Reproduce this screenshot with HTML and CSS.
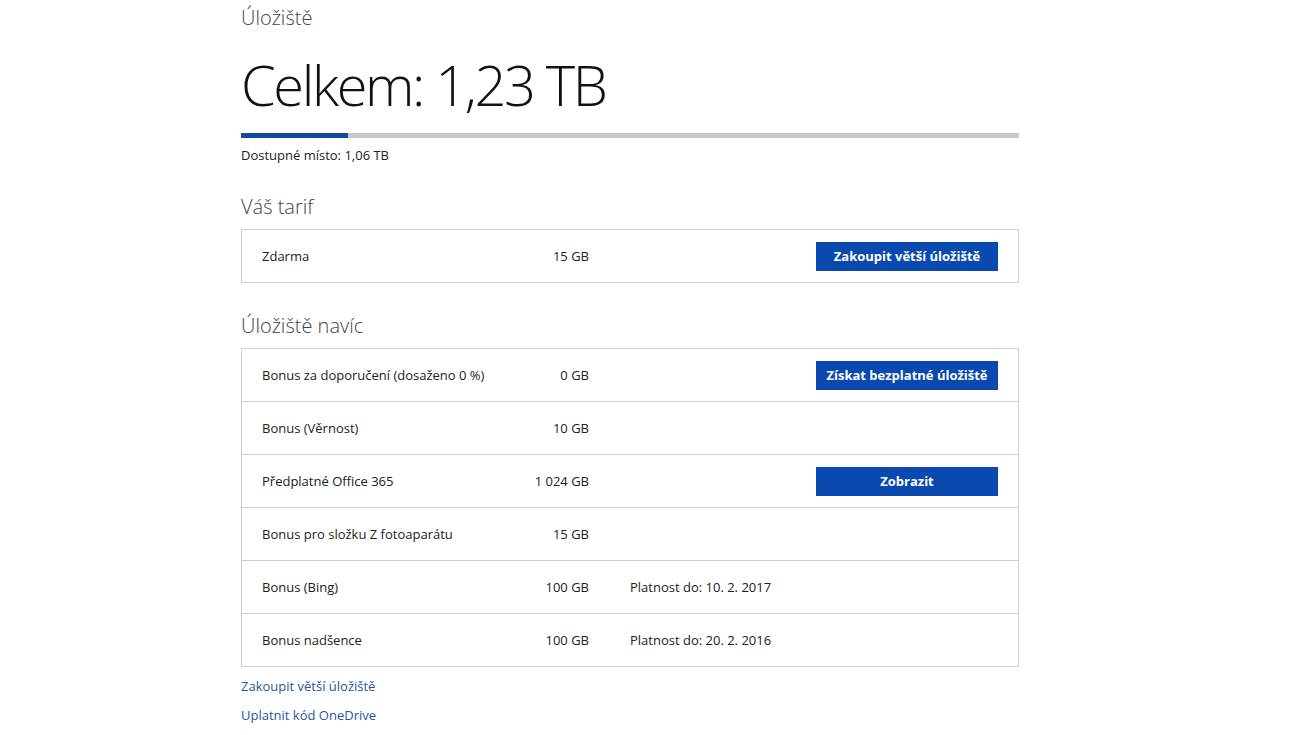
FILE: index.html
```html
<!DOCTYPE html>
<html lang="cs">
<head>
<meta charset="utf-8">
<title>Úložiště</title>
<link rel="stylesheet" href="styles.css">
</head>
<body>
<div class="wrap">
	<h1 class="page_title">Úložiště</h1>
	<div class="total">Celkem: 1,23 TB</div>
	<div class="meter"><div class="meter_fill" style="width:13.7%"></div></div>
	<p class="free">Dostupné místo: 1,06 TB</p>

	<h2 class="sec_title">Váš tarif</h2>
	<ul class="plan_list">
		<li>
			<span class="p_name">Zdarma</span>
			<span class="p_size">15 GB</span>
			<span class="p_note"></span>
			<a class="btn" href="">Zakoupit větší úložiště</a>
		</li>
	</ul>

	<h2 class="sec_title">Úložiště navíc</h2>
	<ul class="plan_list">
		<li>
			<span class="p_name">Bonus za doporučení (dosaženo 0 %)</span>
			<span class="p_size">0 GB</span>
			<span class="p_note"></span>
			<a class="btn" href="">Získat bezplatné úložiště</a>
		</li>
		<li>
			<span class="p_name">Bonus (Věrnost)</span>
			<span class="p_size">10 GB</span>
		</li>
		<li>
			<span class="p_name">Předplatné Office 365</span>
			<span class="p_size">1 024 GB</span>
			<span class="p_note"></span>
			<a class="btn" href="">Zobrazit</a>
		</li>
		<li>
			<span class="p_name">Bonus pro složku Z fotoaparátu</span>
			<span class="p_size">15 GB</span>
		</li>
		<li>
			<span class="p_name">Bonus (Bing)</span>
			<span class="p_size">100 GB</span>
			<span class="p_note">Platnost do: 10. 2. 2017</span>
		</li>
		<li>
			<span class="p_name">Bonus nadšence</span>
			<span class="p_size">100 GB</span>
			<span class="p_note">Platnost do: 20. 2. 2016</span>
		</li>
	</ul>

	<ul class="links">
		<li><a href="">Zakoupit větší úložiště</a></li>
		<li><a href="">Uplatnit kód OneDrive</a></li>
	</ul>
</div>
</body>
</html>
```
FILE: styles.css
```css
* {margin:0; padding:0}
li {list-style: none}
a {text-decoration: none}
body {
	background-color: #fff;
	color: #212121;
	font-family: "Open Sans", "Noto Sans", "Liberation Sans", sans-serif;
	font-size: 13px;
}

.wrap {
	width: 778px;
	margin-left: 241px;
}

.page_title {
	font-size: 20px;
	font-weight: 300;
	color: #444;
	line-height: 26px;
	margin-top: 5px;
}
.total {
	font-size: 56px;
	font-weight: 300;
	color: #111;
	line-height: 70px;
	margin-top: 18px;
	letter-spacing: -2.4px;
}
.meter {
	height: 5px;
	background-color: #c8c8c8;
	margin-top: 14px;
}
.meter_fill {
	height: 100%;
	background-color: #0f4ba1;
}
.free {
	line-height: 18px;
	margin-top: 8px;
}

.sec_title {
	font-size: 20px;
	font-weight: 300;
	color: #444;
	line-height: 26px;
	margin-top: 30px;
	margin-bottom: 9px;
}

.plan_list {
	border: 1px solid #cfcfcf;
}
.plan_list > li {
	display: grid;
	grid-template-columns: 250px 77px 1fr 182px;
	align-items: center;
	height: 52px;
	padding: 0 20px;
}
.plan_list > li + li {
	border-top: 1px solid #cfcfcf;
}
.p_size {text-align: right}
.p_note {padding-left: 41px}
.btn {
	display: block;
	background-color: #0a49b0;
	color: #fff;
	font-weight: 700;
	text-align: center;
	line-height: 29px;
}

.links {margin-top: 5px}
.links li {line-height: 29px}
.links a {color: #2a5699}
```
